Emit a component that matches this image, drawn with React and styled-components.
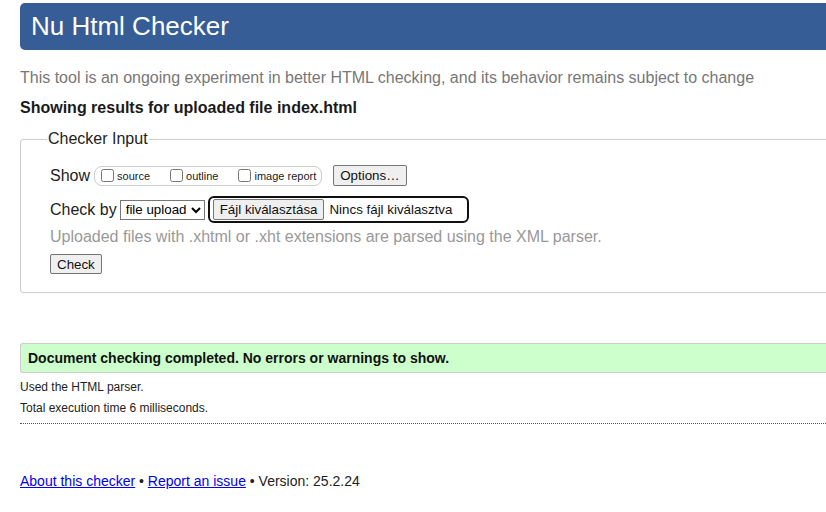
import React from 'react';
import styled, { createGlobalStyle } from 'styled-components';

const GlobalStyle = createGlobalStyle`
  html, body {
    margin: 0;
    padding: 0;
    background: #ffffff;
    overflow: hidden;
  }
  body {
    font-family: "Liberation Sans", Arial, sans-serif;
    color: #000;
  }
`;

const Page = styled.div`
  width: 1040px;
  padding: 3px 0 0 20px;
  box-sizing: border-box;
`;

const Banner = styled.h1`
  margin: 0;
  height: 47px;
  display: flex;
  align-items: center;
  padding: 0 11px;
  border-radius: 5px;
  background: #365d95;
  color: #ffffff;
  font-size: 26px;
  font-weight: normal;
`;

const Intro = styled.p`
  margin: 18px 0 0;
  font-size: 16px;
  line-height: 20px;
  color: #777777;
`;

const ResultsFor = styled.p`
  margin: 10px 0 0;
  font-size: 16px;
  line-height: 20px;
  font-weight: bold;
  color: #1a1a1a;
`;

const Fieldset = styled.fieldset`
  margin: 12px 0 0;
  padding: 17px 29px 18px;
  border: 1px solid #cccccc;
  border-radius: 3px;
`;

const Legend = styled.legend`
  padding: 0 1px;
  margin-left: -3px;
  font-size: 16px;
  color: #222;
`;

const Row = styled.div`
  display: flex;
  align-items: center;
  gap: ${p => p.$gap || 4}px;
  margin-top: ${p => p.$top || 0}px;
  font-size: 16px;
  line-height: 20px;
  color: #222;
`;

const OptionGroup = styled.span`
  display: inline-flex;
  align-items: center;
  height: 18px;
  padding: 0 5px 0 1px;
  border: 1px solid #cccccc;
  border-radius: 8px;
  margin-right: 7px;
`;

const OptionLabel = styled.label`
  display: inline-flex;
  align-items: center;
  margin-right: ${p => p.$last ? 0 : 15}px;
  font-size: 11px;
  color: #222;

  input {
    margin: 0 3px 0 5px;
    width: 13px;
    height: 13px;
  }
`;

const Button = styled.button`
  font-family: "Liberation Sans", Arial, sans-serif;
  font-size: 13.333px;
  height: ${p => p.$h || 20}px;
  padding: 0 6px;
  background: #efefef;
  color: #111;
  border: 1px solid #767676;
  border-radius: 2px;
`;

const Select = styled.select`
  font-family: "Liberation Sans", Arial, sans-serif;
  font-size: 13.333px;
  height: 20px;
  padding: 0 1px;
  border: 1px solid #767676;
  border-radius: 0;
  background: #fff;
  color: #000;
`;

const FilePicker = styled.span`
  display: inline-flex;
  align-items: center;
  gap: 5px;
  height: 23px;
  padding: 0 15px 0 3px;
  border: 2px solid #101010;
  border-radius: 6px;
  font-size: 13.333px;
  color: #111;
`;

const Hint = styled.p`
  margin: 4px 0 0;
  font-size: 16px;
  line-height: 20px;
  color: #999999;
`;

const Success = styled.div`
  margin-top: 50px;
  height: 28px;
  display: flex;
  align-items: center;
  padding: 0 7px;
  background: #ccffcc;
  border: 1px solid #cccccc;
  border-right: none;
  border-radius: 3px 0 0 3px;
  font-size: 14px;
  font-weight: bold;
  color: #111;
`;

const Note = styled.p`
  margin: ${p => p.$top}px 0 0;
  font-size: 12px;
  line-height: 14px;
  color: #222;
`;

const Divider = styled.hr`
  margin: 8px 0 0;
  border: none;
  border-top: 1px dotted #555;
  height: 0;
`;

const Footer = styled.p`
  margin: 48px 0 0;
  font-size: 14px;
  line-height: 18px;
  color: #222;

  a {
    color: #0000ee;
    text-decoration: underline;
  }
`;

export default function App() {
  return (
    <Page>
      <GlobalStyle />
      <Banner>Nu Html Checker</Banner>
      <Intro>This tool is an ongoing experiment in better HTML checking, and its behavior remains subject to change</Intro>
      <ResultsFor>Showing results for uploaded file index.html</ResultsFor>
      <Fieldset>
        <Legend>Checker Input</Legend>
        <Row>
          <span>Show</span>
          <OptionGroup>
            <OptionLabel><input type="checkbox" />source</OptionLabel>
            <OptionLabel><input type="checkbox" />outline</OptionLabel>
            <OptionLabel $last><input type="checkbox" />image report</OptionLabel>
          </OptionGroup>
          <Button $h={21}>Options…</Button>
        </Row>
        <Row $top={10} $gap={3}>
          <span>Check by</span>
          <Select defaultValue="file">
            <option value="file">file upload</option>
          </Select>
          <FilePicker>
            <Button $h={21}>Fájl kiválasztása</Button>
            <span>Nincs fájl kiválasztva</span>
          </FilePicker>
        </Row>
        <Hint>Uploaded files with .xhtml or .xht extensions are parsed using the XML parser.</Hint>
        <Row $top={7}>
          <Button>Check</Button>
        </Row>
      </Fieldset>
      <Success>Document checking completed. No errors or warnings to show.</Success>
      <Note $top={7}>Used the HTML parser.</Note>
      <Note $top={7}>Total execution time 6 milliseconds.</Note>
      <Divider />
      <Footer>
        <a href="#about">About this checker</a> • <a href="#issue">Report an issue</a> • Version: 25.2.24
      </Footer>
    </Page>
  );
}
